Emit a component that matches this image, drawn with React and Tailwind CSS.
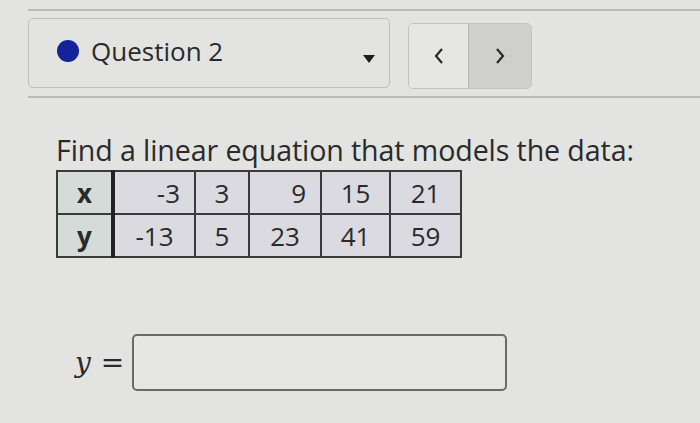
export default function App() {
  const xs = ['-3', '3', '9', '15', '21']
  const ys = ['-13', '5', '23', '41', '59']
  const widths = ['w-[82px]', 'w-[54px]', 'w-[72px]', 'w-[69px]', 'w-[71px]']
  const align = ['text-right pr-[14px]', 'text-center', 'text-right pr-[14px]', 'text-center', 'text-center']

  return (
    <div className="w-[700px] h-[423px] overflow-hidden bg-[#e3e3e1] font-['Open_Sans',sans-serif] text-[#2a2a2a]">
      <div className="ml-[28px] mt-[9px] border-t-2 border-b-2 border-[#b9b9b7] pt-[6px] pb-[7px] flex items-center gap-[18px]">
        <div className="w-[362px] h-[70px] border border-[#bdbdbb] rounded-[5px] flex items-center pl-[28px] pr-[14px]">
          <span className="mb-[4px] w-[22px] h-[22px] rounded-full bg-[#14239a]" />
          <span className="ml-[12px] mb-[4px] text-[26px] leading-none">Question 2</span>
          <span className="ml-auto mt-[12px] w-0 h-0 border-l-[6px] border-r-[6px] border-t-[8px] border-l-transparent border-r-transparent border-t-[#1e1e1e]" />
        </div>
        <div className="mt-[6px] flex h-[66px] border border-[#c2c2c0] rounded-[5px] overflow-hidden">
          <div className="w-[60px] flex items-center justify-center bg-[#e6e6e4] border-r border-[#b5b5b3]">
            <svg width="12" height="18" viewBox="0 0 12 18"><path d="M9 2 L3 9 L9 16" fill="none" stroke="#2a2a2a" strokeWidth="2.2" /></svg>
          </div>
          <div className="w-[62px] flex items-center justify-center bg-[#cfcfcd]">
            <svg width="12" height="18" viewBox="0 0 12 18"><path d="M3 2 L9 9 L3 16" fill="none" stroke="#2a2a2a" strokeWidth="2.2" /></svg>
          </div>
        </div>
      </div>

      <div className="ml-[56px] mt-[34px]">
        <p className="text-[28.6px] leading-[36px] tracking-[-0.1px]">Find a linear equation that models the data:</p>
        <table className="mt-[2px] border-collapse text-[26px] leading-none">
          <tbody>
            {[['x', xs], ['y', ys]].map(([label, vals]) => (
              <tr key={label} className="h-[43px]">
                <td className="w-[56px] border-2 border-[#3a3a3a] border-r-[4px] border-r-[#222] bg-[#d4dbd9] text-center font-bold">{label}</td>
                {vals.map((v, i) => (
                  <td key={i} className={`${widths[i]} ${label === 'x' ? align[i] : 'text-center'} border-2 border-[#3a3a3a] bg-[#dadae0]`}>{v}</td>
                ))}
              </tr>
            ))}
          </tbody>
        </table>
      </div>

      <div className="ml-[75px] mt-[76px] flex items-center">
        <span className="font-['DejaVu_Serif',serif] italic text-[28px]">y</span>
        <span className="ml-[10px] text-[28px] font-['DejaVu_Serif',serif]">=</span>
        <div className="ml-[8px] w-[375px] h-[57px] border-2 border-[#6a6a68] rounded-[5px] bg-[#e6e6e4]" />
      </div>
    </div>
  )
}
